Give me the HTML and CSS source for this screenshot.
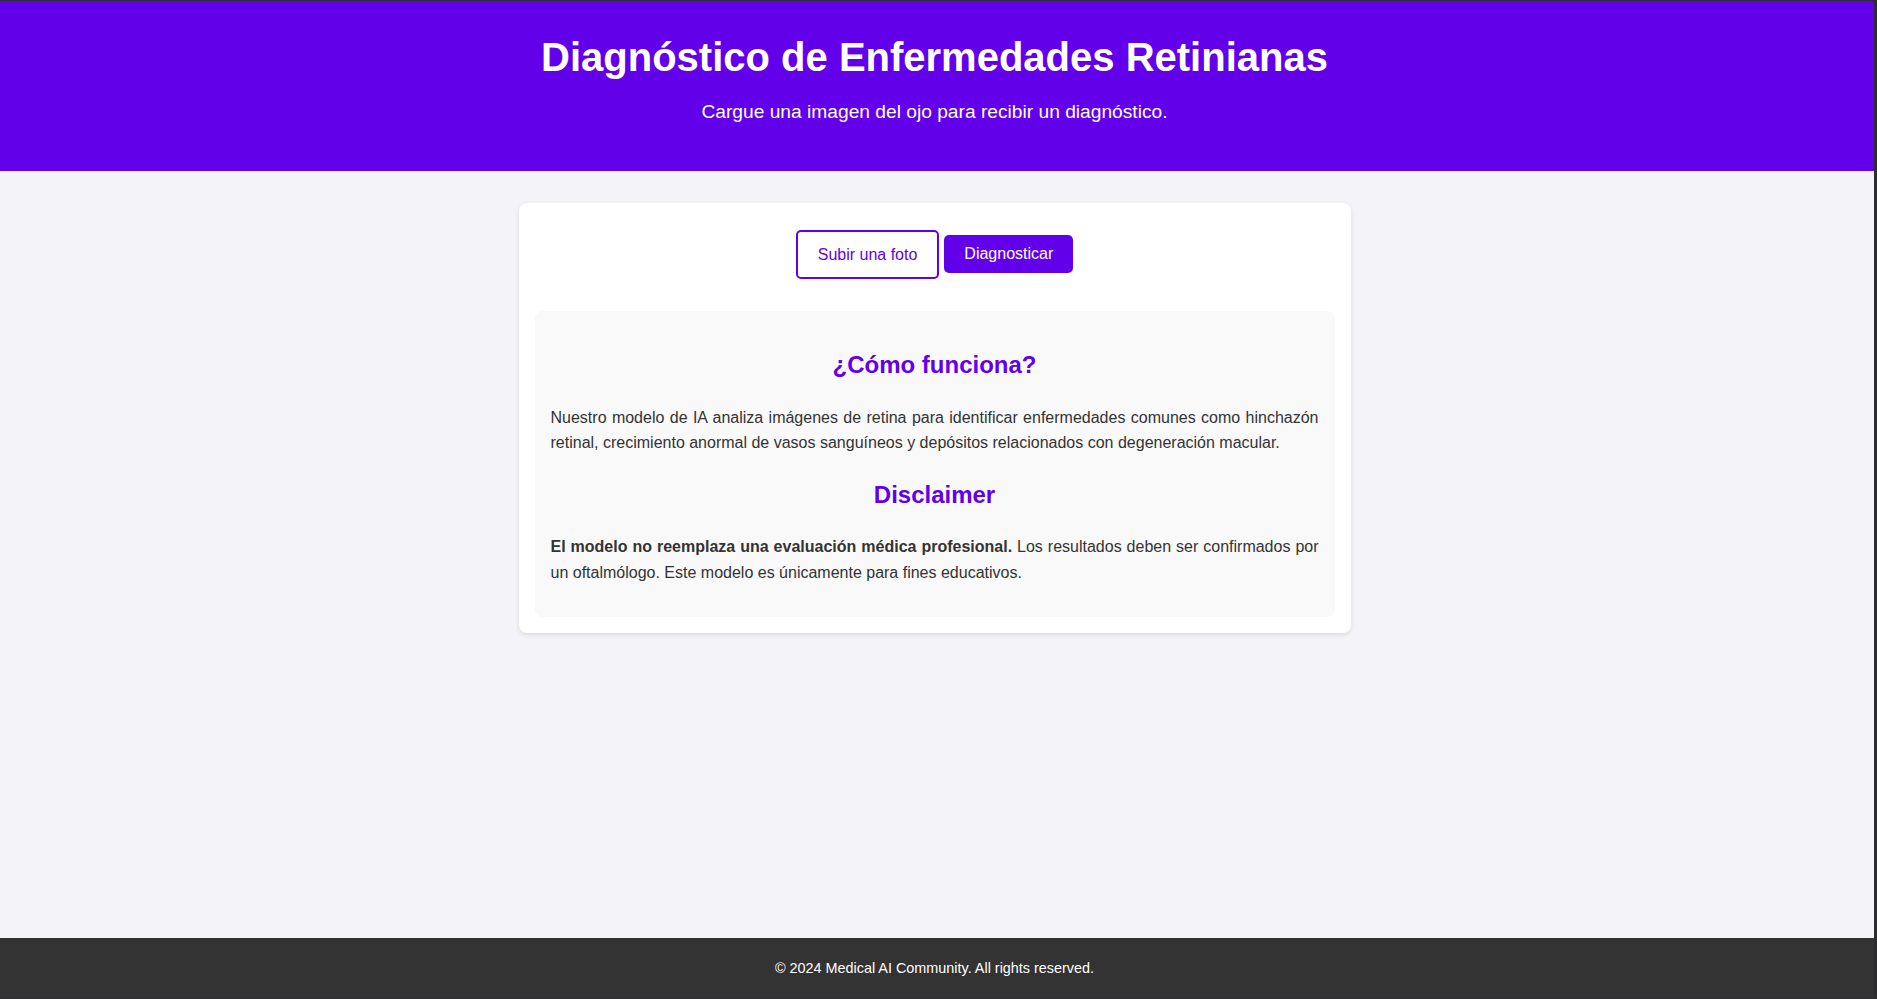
FILE: index.html
```html
<!DOCTYPE html>
<html lang="es">
<head>
<meta charset="utf-8">
<title>Diagnóstico de Enfermedades Retinianas</title>
<link rel="stylesheet" href="styles.css">
</head>
<body>
<div class="frame">
  <header class="hero">
    <h1>Diagnóstico de Enfermedades Retinianas</h1>
    <p>Cargue una imagen del ojo para recibir un diagnóstico.</p>
  </header>
  <main class="main">
    <section class="card">
      <div class="upload">
        <label class="btn-outline">Subir una foto</label>
        <button class="btn-primary" type="button">Diagnosticar</button>
      </div>
      <div class="info">
        <h2>¿Cómo funciona?</h2>
        <p>Nuestro modelo de IA analiza imágenes de retina para identificar enfermedades comunes como hinchazón retinal, crecimiento anormal de vasos sanguíneos y depósitos relacionados con degeneración macular.</p>
        <h2>Disclaimer</h2>
        <p><strong>El modelo no reemplaza una evaluación médica profesional.</strong> Los resultados deben ser confirmados por un oftalmólogo. Este modelo es únicamente para fines educativos.</p>
      </div>
    </section>
  </main>
  <footer class="footer">
    <p>© 2024 Medical AI Community. All rights reserved.</p>
  </footer>
</div>
</body>
</html>
```
FILE: styles.css
```css
html, body {
  margin: 0;
  height: 100%;
}
body {
  font-family: "Liberation Sans", Arial, sans-serif;
  line-height: 1.6;
  color: #333;
  background: #2d2d30;
}
.frame {
  height: 100vh;
  box-sizing: border-box;
  border-top: 1px solid #2d2d30;
  border-right: 3px solid #2d2d30;
  border-bottom: 1px solid #2d2d30;
  display: flex;
  flex-direction: column;
  background: #f4f4f8;
}
.hero {
  background: #6200ea;
  color: #fff;
  text-align: center;
  padding: 24px 5px 43px 0;
  flex: none;
}
.hero h1 {
  margin: 0 0 8px;
  font-size: 40px;
  line-height: 64px;
  font-weight: bold;
}
.hero p {
  margin: 0;
  font-size: 19.2px;
}
.main {
  flex: 1;
  display: flex;
  justify-content: center;
  align-items: flex-start;
  padding: 32px 5px 0 0;
}
.card {
  width: 800px;
  padding: 16px;
  background: #fff;
  border-radius: 8px;
  box-shadow: 0 2px 5px rgba(0, 0, 0, 0.1);
}
.upload {
  display: flex;
  justify-content: center;
  align-items: center;
  gap: 5px;
  padding-top: 11px;
  margin-bottom: 32px;
}
.btn-outline {
  display: inline-block;
  padding: 10px 20px;
  border: 2px solid #6200ea;
  border-radius: 5px;
  background: #fff;
  color: #6200ea;
  font-size: 16px;
  line-height: 25.6px;
  cursor: pointer;
}
.btn-primary {
  padding: 10px 20px;
  margin-bottom: 1px;
  border: none;
  border-radius: 5px;
  background: #6200ea;
  color: #fff;
  font-family: "Liberation Sans", Arial, sans-serif;
  font-size: 16px;
  line-height: normal;
  cursor: pointer;
}
.info {
  background: #f9f9f9;
  border-radius: 8px;
  padding: 15px 16px 16px;
}
.info h2 {
  color: #6200ea;
  font-size: 24px;
  text-align: center;
  margin: 20px 0;
}
.info p {
  margin: 16px 0;
  font-size: 16px;
  text-align: justify;
}
.footer {
  flex: none;
  height: 60px;
  box-sizing: border-box;
  padding: 2px 5px 0 0;
  background: #333;
  color: #fff;
  display: flex;
  align-items: center;
  justify-content: center;
  font-size: 14.4px;
}
.footer p {
  margin: 0;
}
```
